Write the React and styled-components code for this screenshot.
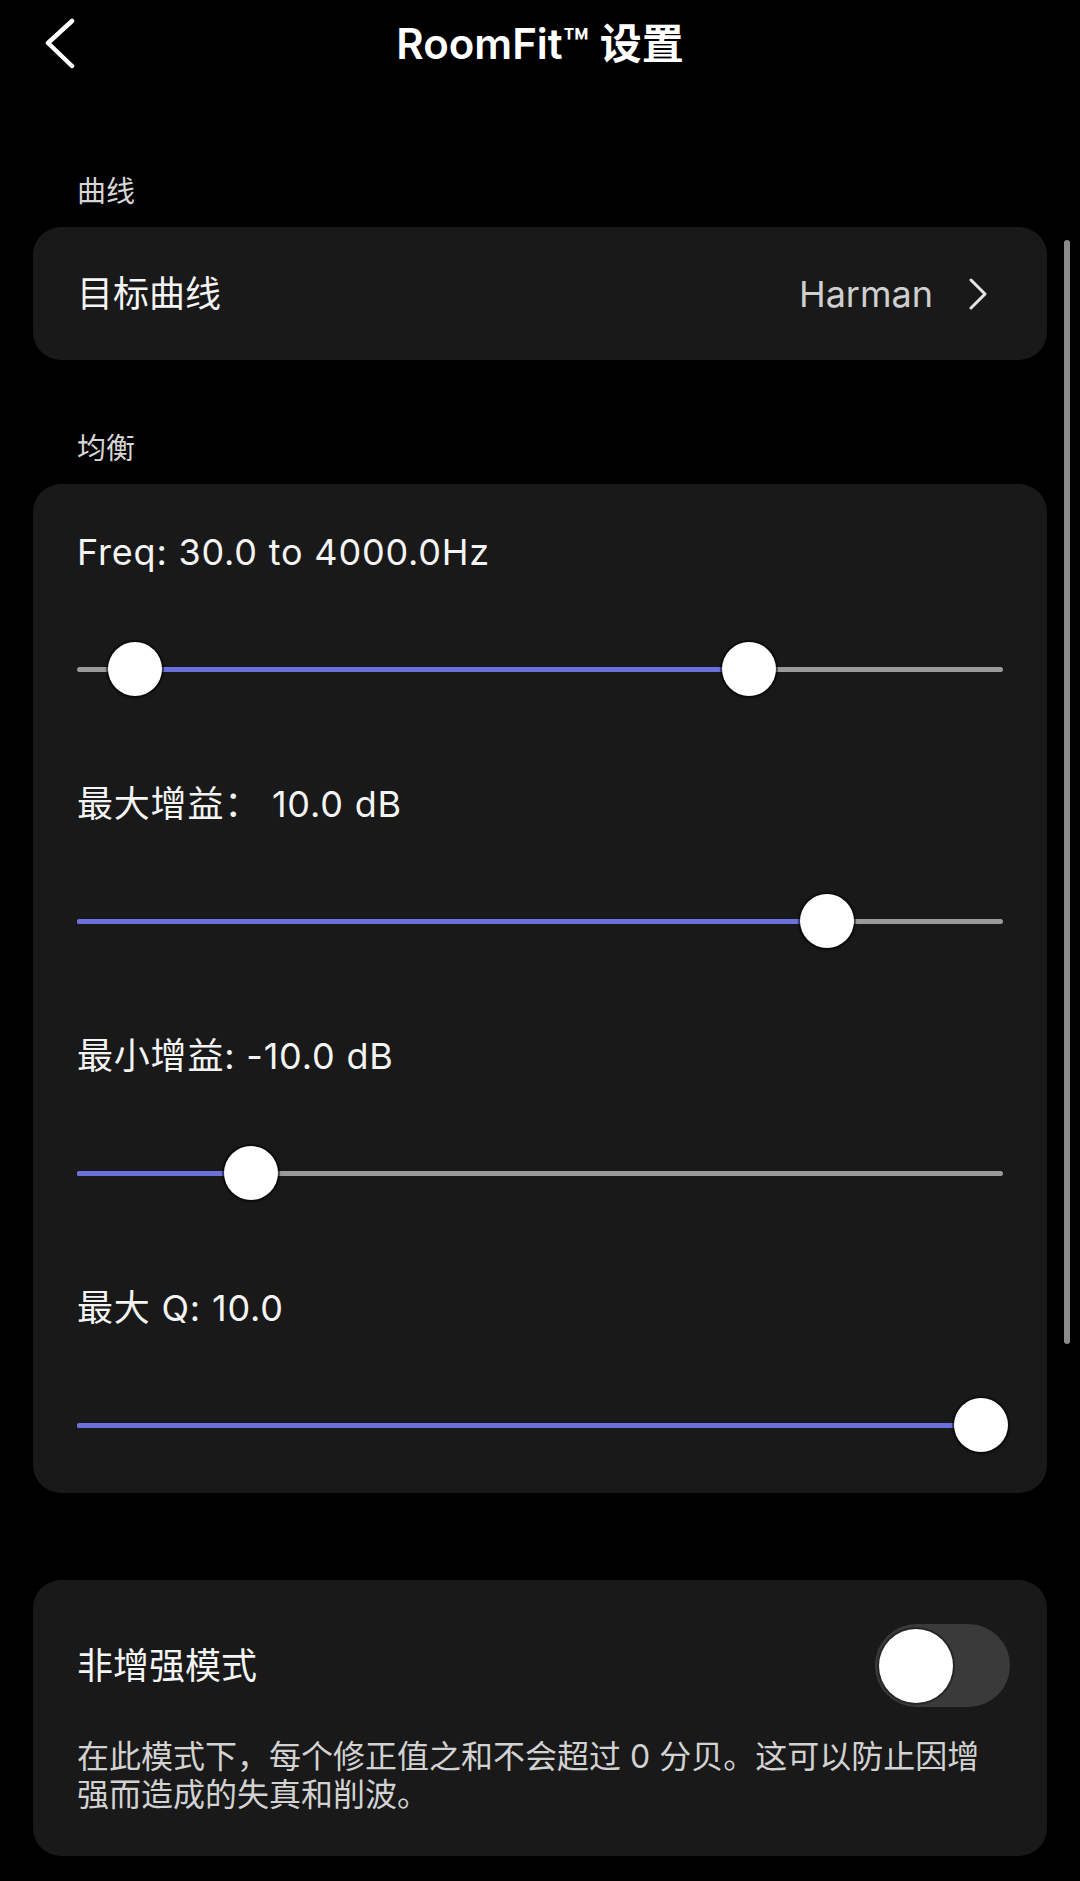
import styled, { createGlobalStyle } from 'styled-components';

const GlobalStyle = createGlobalStyle`
  html, body {
    margin: 0;
    padding: 0;
    background: #000;
  }
  body {
    font-family: Inter, "Noto Sans CJK SC", sans-serif;
    color: #f2f2f2;
    -webkit-font-smoothing: antialiased;
  }
`;

const Page = styled.div`
  position: relative;
  width: 1080px;
  min-height: 1881px;
  background: #000;
  padding: 0 33px;
  box-sizing: border-box;
`;

const Header = styled.header`
  display: grid;
  grid-template-columns: 1fr auto 1fr;
  align-items: center;
  height: 88px;
  margin: 0 -33px;
`;

const BackButton = styled.button`
  justify-self: start;
  display: flex;
  align-items: center;
  margin-left: 44px;
  padding: 0;
  border: none;
  background: none;
  cursor: pointer;
`;

const Title = styled.h1`
  margin: 0;
  font-size: 42px;
  font-weight: 600;
  color: #fff;
  line-height: 1;
`;

const SectionLabel = styled.div`
  height: 34px;
  margin: ${(p) => p.$top}px 0 18px;
  padding-left: 44px;
  font-size: 29px;
  line-height: 34px;
  color: #d6d6d6;
`;

const Card = styled.section`
  background: #191919;
  border-radius: 28px;
  box-sizing: border-box;
`;

const LinkRow = styled.div`
  display: flex;
  align-items: center;
  justify-content: space-between;
  height: 133px;
  padding: 0 59px 0 44px;
`;

const RowTitle = styled.span`
  font-size: 36px;
  line-height: 44px;
  color: #f4f4f4;
`;

const RowValue = styled.span`
  display: flex;
  align-items: center;
  gap: 35px;
  font-size: 36px;
  line-height: 44px;
  color: #cfcfcf;
`;

const EqCard = styled(Card)`
  margin-bottom: 87px;
  padding: 46px 44px 41px;
`;

const Control = styled.div`
  & + & {
    margin-top: 86px;
  }
`;

const ControlLabel = styled.div`
  height: 44px;
  font-size: 36px;
  line-height: 44px;
  letter-spacing: 0.8px;
  color: #f4f4f4;
  white-space: pre;
`;

const SliderBox = styled.div`
  position: relative;
  display: flex;
  align-items: center;
  height: 54px;
  margin-top: 68px;
`;

const Track = styled.div`
  position: relative;
  flex: 1;
  height: 5px;
  border-radius: 3px;
  background: #9a9a9a;
`;

const Fill = styled.div`
  position: absolute;
  top: 0;
  bottom: 0;
  border-radius: 3px;
  background: #6b70dc;
`;

const Thumb = styled.div`
  position: absolute;
  top: 0;
  width: 54px;
  height: 54px;
  margin-left: -27px;
  border-radius: 50%;
  background: #fff;
  box-shadow: 0 0 0 2px rgba(0, 0, 0, 0.45), 0 1px 4px rgba(0, 0, 0, 0.4);
`;

const ModeCard = styled(Card)`
  padding: 44px 44px 42px;
`;

const ModeRow = styled.div`
  display: flex;
  align-items: center;
  justify-content: space-between;
  height: 83px;
`;

const Switch = styled.div`
  display: flex;
  align-items: center;
  width: 135px;
  height: 83px;
  margin-right: -7px;
  padding: 0 4px;
  box-sizing: border-box;
  border-radius: 42px;
  background: #3a3a3a;
`;

const SwitchKnob = styled.div`
  width: 74px;
  height: 74px;
  border-radius: 50%;
  background: #fff;
  box-shadow: 0 0 0 2px rgba(0, 0, 0, 0.35);
`;

const Description = styled.p`
  margin: 31px 0 0;
  font-size: 32px;
  line-height: 38px;
  color: #d2d2d2;
`;

const ScrollBar = styled.div`
  position: absolute;
  left: 1064px;
  top: 240px;
  width: 6px;
  height: 1104px;
  border-radius: 3px;
  background: #8c8c8c;
`;

// slider positions: the thumb centre runs from 26px to 904px along the 928px box
const THUMB_MIN = 26;
const THUMB_SPAN = 878;

const sliders = [
  { label: 'Freq: 30.0 to 4000.0Hz', values: [0.037, 0.736] },
  { label: '最大增益： 10.0 dB', values: [0.825] },
  { label: '最小增益: -10.0 dB', values: [0.168] },
  { label: '最大 Q: 10.0', values: [1] },
];

function Slider({ values }) {
  const pos = values.map((v) => THUMB_MIN + v * THUMB_SPAN);
  const from = pos.length > 1 ? pos[0] : 0;
  const to = pos[pos.length - 1];
  return (
    <SliderBox>
      <Track>
        <Fill style={{ left: from, width: to - from }} />
      </Track>
      {pos.map((p, i) => (
        <Thumb key={i} style={{ left: p }} />
      ))}
    </SliderBox>
  );
}

function ChevronLeft() {
  return (
    <svg width="32" height="52" viewBox="0 0 32 52" fill="none">
      <polyline
        points="28,3 4,25 28,48"
        stroke="#fff"
        strokeWidth="4.5"
        strokeLinecap="round"
        strokeLinejoin="round"
      />
    </svg>
  );
}

function ChevronRight() {
  return (
    <svg width="20" height="32" viewBox="0 0 20 32" fill="none">
      <polyline
        points="3,2 17,16 3,30"
        stroke="#e6e6e6"
        strokeWidth="3"
        strokeLinecap="round"
        strokeLinejoin="round"
      />
    </svg>
  );
}

export default function App() {
  return (
    <>
      <GlobalStyle />
      <Page>
        <Header>
          <BackButton aria-label="返回">
            <ChevronLeft />
          </BackButton>
          <Title>RoomFit™ 设置</Title>
          <span />
        </Header>

        <SectionLabel $top={87}>曲线</SectionLabel>
        <Card>
          <LinkRow>
            <RowTitle>目标曲线</RowTitle>
            <RowValue>
              Harman
              <ChevronRight />
            </RowValue>
          </LinkRow>
        </Card>

        <SectionLabel $top={72}>均衡</SectionLabel>
        <EqCard>
          {sliders.map((s) => (
            <Control key={s.label}>
              <ControlLabel>{s.label}</ControlLabel>
              <Slider values={s.values} />
            </Control>
          ))}
        </EqCard>

        <ModeCard>
          <ModeRow>
            <RowTitle>非增强模式</RowTitle>
            <Switch>
              <SwitchKnob />
            </Switch>
          </ModeRow>
          <Description>
            在此模式下，每个修正值之和不会超过 0 分贝。这可以防止因增强而造成的失真和削波。
          </Description>
        </ModeCard>

        <ScrollBar />
      </Page>
    </>
  );
}
